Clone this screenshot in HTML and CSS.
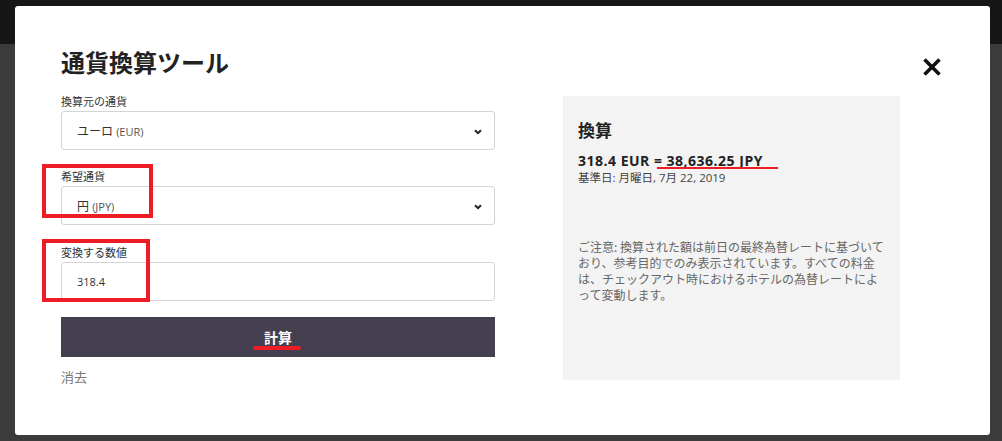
FILE: index.html
```html
<!DOCTYPE html>
<html lang="ja">
<head>
  <meta charset="UTF-8" />
  <meta name="viewport" content="width=device-width, initial-scale=1.0"/>
  <title>通貨換算ツール</title>
  <link rel="stylesheet" href="styles.css">
</head>
<body>
  <div class="backdrop">
    <div class="topbar"></div>
  </div>

  <div class="modal">
    <div class="form-col">
      <h2>通貨換算ツール</h2>

      <label class="first">換算元の通貨</label>
      <div class="field select">
        <span>ユーロ <small>(EUR)</small></span>
        <svg class="chevron" width="8" height="6" viewBox="0 0 8 6"><path d="M1 1.2 L4 4.2 L7 1.2" fill="none" stroke="#222" stroke-width="2"/></svg>
      </div>

      <label>希望通貨</label>
      <div class="field select">
        <span>円 <small>(JPY)</small></span>
        <svg class="chevron" width="8" height="6" viewBox="0 0 8 6"><path d="M1 1.2 L4 4.2 L7 1.2" fill="none" stroke="#222" stroke-width="2"/></svg>
      </div>

      <label class="last">変換する数値</label>
      <div class="field">
        <span class="value">318.4</span>
      </div>

      <button class="calc">計算</button>
      <a class="clear">消去</a>
    </div>

    <div class="result">
      <h3>換算</h3>
      <div class="amount">318.4 EUR = 38,636.25 JPY</div>
      <div class="date">基準日: 月曜日, 7月 22, 2019</div>
      <p class="note">ご注意: 換算された額は前日の最終為替レートに基づいて<br>おり、参考目的でのみ表示されています。すべての料金<br>は、チェックアウト時におけるホテルの為替レートによ<br>って変動します。</p>
    </div>

    <svg class="close" width="20" height="20" viewBox="0 0 20 20"><path d="M2.5 2.5 L17.5 17.5 M17.5 2.5 L2.5 17.5" stroke="#111" stroke-width="3.6"/></svg>
  </div>

  <!-- red annotation marks -->
  <div class="mark box-one"></div>
  <div class="mark box-two"></div>
  <div class="mark line-calc"></div>
  <div class="mark line-jpy"></div>
</body>
</html>
```

FILE: styles.css
```css
body {
  margin: 0;
  font-family: "Open Sans", "Noto Sans CJK JP", sans-serif;
  color: #333;
}
.backdrop {
  height: 441px;
  background: #3b3b3b;
}
.topbar {
  height: 44px;
  background: #161616;
}
.modal {
  position: fixed;
  top: 6px;
  left: 15px;
  width: 975px;
  height: 429px;
  box-sizing: border-box;
  padding: 41px 0 0 46px;
  background: #ffffff;
  border-radius: 3px;
  display: flex;
  align-items: flex-start;
}
.form-col {
  width: 434px;
  display: flex;
  flex-direction: column;
}
.form-col h2 {
  margin: 0;
  font-family: "Noto Sans CJK JP", sans-serif;
  font-size: 24px;
  line-height: 30px;
  font-weight: 700;
  color: #222;
}
label {
  display: block;
  margin-top: 17px;
  font-family: "Noto Sans CJK JP", sans-serif;
  font-size: 11px;
  line-height: 18px;
  color: #333;
}
label.first {
  margin-top: 15px;
}
label.last {
  margin-top: 18px;
}
.field {
  margin-top: 1px;
  height: 39px;
  box-sizing: border-box;
  border: 1px solid #d4d4d4;
  border-radius: 3px;
  padding: 0 12px 0 15px;
  display: flex;
  align-items: center;
  justify-content: space-between;
  font-size: 12px;
  color: #333;
}
.field small {
  font-size: 11px;
  color: #555;
}
.field .value {
  font-size: 11px;
}
.chevron {
  margin-top: 2px;
}
.calc {
  margin-top: 16px;
  height: 40px;
  border: none;
  border-radius: 0;
  background: #45404f;
  color: #ffffff;
  font-family: "Noto Sans CJK JP", sans-serif;
  font-size: 14px;
  font-weight: 700;
}
.clear {
  margin-top: 10px;
  font-family: "Noto Sans CJK JP", sans-serif;
  font-size: 13px;
  color: #777;
}
.result {
  margin: 49px 0 0 68px;
  width: 337px;
  height: 284px;
  box-sizing: border-box;
  padding: 22px 0 0 15px;
  background: #f3f3f3;
}
.result h3 {
  margin: 0;
  font-family: "Noto Sans CJK JP", sans-serif;
  font-size: 17px;
  line-height: 24px;
  font-weight: 700;
  color: #222;
}
.amount {
  margin-top: 10px;
  font-size: 14px;
  line-height: 18px;
  font-weight: 700;
  letter-spacing: 0.5px;
  color: #222;
}
.date {
  font-size: 11.5px;
  line-height: 15px;
  color: #444;
}
.note {
  margin: 54px 0 0;
  font-family: "Noto Sans CJK JP", sans-serif;
  font-size: 12px;
  line-height: 16px;
  color: #666;
}
.close {
  margin: 10px 0 0 22px;
}
.mark {
  position: absolute;
  box-sizing: border-box;
}
.box-one {
  left: 42px;
  top: 164px;
  width: 111px;
  height: 54px;
  border: 4px solid #ee1c25;
}
.box-two {
  left: 42px;
  top: 239px;
  width: 108px;
  height: 63px;
  border: 4px solid #ee1c25;
}
.line-calc {
  left: 253px;
  top: 346px;
  width: 48px;
  height: 4px;
  border-radius: 2px;
  background: #ee1c25;
}
.line-jpy {
  left: 657px;
  top: 167px;
  width: 121px;
  height: 2px;
  background: #ee1c25;
}
```
